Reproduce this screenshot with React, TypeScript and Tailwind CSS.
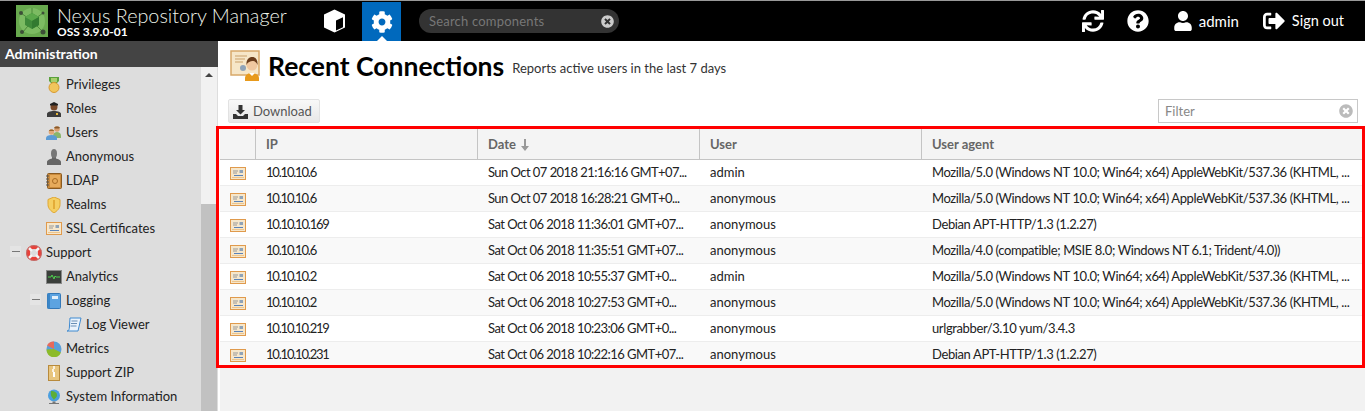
import { FaCog, FaQuestionCircle, FaSignOutAlt, FaSync, FaTimesCircle, FaUser } from 'react-icons/fa';

const font = "font-['Lato','Liberation_Sans',sans-serif]";

interface Row {
  ip: string;
  date: string;
  user: string;
  agent: string;
}

const chrome = 'Mozilla/5.0 (Windows NT 10.0; Win64; x64) AppleWebKit/537.36 (KHTML, ...';

const rows: Row[] = [
  { ip: '10.10.10.6', date: 'Sun Oct 07 2018 21:16:16 GMT+07...', user: 'admin', agent: chrome },
  { ip: '10.10.10.6', date: 'Sun Oct 07 2018 16:28:21 GMT+0...', user: 'anonymous', agent: chrome },
  { ip: '10.10.10.169', date: 'Sat Oct 06 2018 11:36:01 GMT+07...', user: 'anonymous', agent: 'Debian APT-HTTP/1.3 (1.2.27)' },
  { ip: '10.10.10.6', date: 'Sat Oct 06 2018 11:35:51 GMT+07...', user: 'anonymous', agent: 'Mozilla/4.0 (compatible; MSIE 8.0; Windows NT 6.1; Trident/4.0))' },
  { ip: '10.10.10.2', date: 'Sat Oct 06 2018 10:55:37 GMT+0...', user: 'admin', agent: chrome },
  { ip: '10.10.10.2', date: 'Sat Oct 06 2018 10:27:53 GMT+0...', user: 'anonymous', agent: chrome },
  { ip: '10.10.10.219', date: 'Sat Oct 06 2018 10:23:06 GMT+0...', user: 'anonymous', agent: 'urlgrabber/3.10 yum/3.4.3' },
  { ip: '10.10.10.231', date: 'Sat Oct 06 2018 10:22:16 GMT+07...', user: 'anonymous', agent: 'Debian APT-HTTP/1.3 (1.2.27)' },
];

const Logo = () => (
  <svg width="32" height="32" viewBox="0 0 32 32">
    <rect width="32" height="32" fill="#68a94e" />
    <circle cx="16" cy="16" r="13" fill="#7cbb62" />
    <path d="M16 16L5 8M16 16L27 8M16 16L7 27M16 16L27 27M16 16V3" stroke="#4d8a3a" strokeWidth="1" />
    <circle cx="5" cy="8" r="2" fill="#3d4f38" />
    <circle cx="27" cy="8" r="1.500" fill="#3d4f38" />
    <circle cx="6" cy="27" r="2" fill="#3d4f38" />
    <circle cx="27" cy="27" r="2.500" fill="#3d4f38" />
    <path d="M16 8l7 4v8l-7 4-7-4v-8z" fill="#3f8a3a" />
    <path d="M16 8l7 4-7 4-7-4z" fill="#5aa84a" />
    <path d="M16 16l7-4v8l-7 4z" fill="#327a30" />
  </svg>
);

const CubeIcon = () => (
  <svg width="23" height="24" viewBox="0 0 23 24">
    <path d="M11.500 0.500l10.500 5v13l-10.500 5-10.500-5v-13z" fill="#fff" />
    <path d="M13 11.500l7-3.300v10l-7 3.300z" fill="#000" />
  </svg>
);

const Cert = () => (
  <svg width="16" height="13" viewBox="0 0 16 13">
    <rect x="0.500" y="0.500" width="15" height="12" fill="#f6e7cc" stroke="#e09a4c" />
    <path d="M3 4h5M3 6h4" stroke="#999" />
    <rect x="9.500" y="3" width="3.500" height="3" fill="#8fa3b8" />
    <path d="M4 8.500h9" stroke="#5a82b8" />
    <path d="M2 10.500h12" stroke="#ecc48c" />
  </svg>
);

const Medal = () => (
  <svg width="16" height="16" viewBox="0 0 16 16">
    <path d="M3 0h10v4l-3 3H6L3 4z" fill="#5aa13c" />
    <rect x="5" y="1" width="6" height="4" fill="#a9cf6d" />
    <circle cx="8" cy="10.500" r="5" fill="#f1c65c" stroke="#d99a30" />
  </svg>
);

const Officer = () => (
  <svg width="16" height="16" viewBox="0 0 16 16">
    <path d="M1 16v-3c0-2 3-3 7-3s7 1 7 3v3z" fill="#3d3d3d" />
    <circle cx="8" cy="6" r="3.500" fill="#7a4a2a" />
    <path d="M4 3l4-2 4 2v1.500H4z" fill="#222" />
    <rect x="10" y="12" width="2" height="2" fill="#e8b83a" />
  </svg>
);

const UsersIcon = () => (
  <svg width="16" height="16" viewBox="0 0 16 16">
    <circle cx="11" cy="4" r="2.800" fill="#d9a070" />
    <path d="M7 11c0-3 2-4 4-4s4 1 4 4v2H7z" fill="#8ab56a" />
    <path d="M8 2.500c1-1.500 5-1.500 6 0l-1 1H9z" fill="#8a5a2a" />
    <circle cx="5.500" cy="7" r="2.800" fill="#e0a878" />
    <path d="M3 6c0-2 5-2 5 0z" fill="#9a6a30" />
    <path d="M0 15v-2c0-2 2.500-3 5.500-3s5.500 1 5.500 3v2z" fill="#5b9bd5" />
  </svg>
);

const AnonIcon = () => (
  <svg width="16" height="16" viewBox="0 0 16 16">
    <path d="M1 16v-3c0-2 3-3 5-3.500V7h4v2.500c2 .5 5 1.500 5 3.500v3z" fill="#666" />
    <ellipse cx="8" cy="4.500" rx="3" ry="4.500" fill="#777" />
  </svg>
);

const LdapIcon = () => (
  <svg width="16" height="16" viewBox="0 0 16 16">
    <rect x="1.500" y="0.500" width="14" height="15" rx="1" fill="#c98a3c" stroke="#8a5a20" />
    <rect x="4" y="2" width="10" height="12" fill="#e6ab5c" />
    <path d="M0 3h3M0 6h3M0 9h3M0 12h3" stroke="#555" />
    <circle cx="9" cy="8" r="2.500" fill="none" stroke="#a86c24" />
  </svg>
);

const Shield = () => (
  <svg width="16" height="16" viewBox="0 0 16 16">
    <path d="M8 0l6 2.500v5c0 4-3 6.500-6 8.500-3-2-6-4.500-6-8.500v-5z" fill="#f5cf62" stroke="#dfa632" />
    <path d="M8 3v9" stroke="#e3ac38" strokeWidth="2" />
  </svg>
);

const Lifebuoy = () => (
  <svg width="16" height="16" viewBox="0 0 16 16">
    <circle cx="8" cy="8" r="6" fill="none" stroke="#e8413a" strokeWidth="4" />
    <path d="M3 3l3 3M13 3l-3 3M3 13l3-3M13 13l-3-3" stroke="#f3f3f3" strokeWidth="2.500" />
    <circle cx="8" cy="8" r="7.500" fill="none" stroke="#999" strokeWidth="0.500" />
  </svg>
);

const Monitor = () => (
  <svg width="16" height="16" viewBox="0 0 16 16">
    <rect x="0.500" y="1.500" width="15" height="13" fill="#3b3f3b" stroke="#8a8a8a" />
    <path d="M2 8h3l1-2 2 4 1-3 1 1h4" fill="none" stroke="#4fd14f" />
  </svg>
);

const BookIcon = () => (
  <svg width="16" height="16" viewBox="0 0 16 16">
    <rect x="1.500" y="0.500" width="13" height="15" rx="1" fill="#5da3e0" stroke="#3478b8" />
    <rect x="1.500" y="0.500" width="2.500" height="15" fill="#3a86c8" />
    <rect x="6" y="3" width="6" height="3" fill="#e4f0fb" />
  </svg>
);

const Scroll = () => (
  <svg width="16" height="16" viewBox="0 0 16 16">
    <path d="M4 1h11l-3 13H1c1.500 0 2-1 2.300-2.500z" fill="#eaf3fc" stroke="#3f8ad0" />
    <path d="M5.500 4h6M5 6.500h6M4.500 9h6" stroke="#6a8fb5" />
  </svg>
);

const Pie = () => (
  <svg width="16" height="16" viewBox="0 0 16 16">
    <circle cx="8" cy="8" r="7.500" fill="#5a9fd8" />
    <path d="M8 8L1 4.500A7.500 7.500 0 0 1 8 .5z" fill="#e86a5a" />
    <path d="M8 8l7 3.500A7.500 7.500 0 0 1 .5 8.500z" fill="#8cbb2a" />
  </svg>
);

const ZipIcon = () => (
  <svg width="16" height="16" viewBox="0 0 16 16">
    <rect x="2.500" y="0.500" width="11" height="15" fill="#e8c57e" stroke="#b88a3c" />
    <path d="M8 1v3M7 4v3" stroke="#fff" strokeWidth="1.500" />
    <rect x="7" y="7" width="2" height="5" fill="#fff" />
  </svg>
);

const Globe = () => (
  <svg width="16" height="16" viewBox="0 0 16 16">
    <circle cx="8" cy="6.500" r="6" fill="#4a9fe0" />
    <path d="M5 2c3 0 6 1 6 4s-2 3-3 5c-1-2-4-3-3-9z" fill="#5cae3a" />
    <path d="M3 15h10v-1H9.500v-1.500h-3V14H3z" fill="#777" />
  </svg>
);

const navItems = [
  { name: 'Privileges', icon: <Medal />, indent: 46 },
  { name: 'Roles', icon: <Officer />, indent: 46 },
  { name: 'Users', icon: <UsersIcon />, indent: 46 },
  { name: 'Anonymous', icon: <AnonIcon />, indent: 46 },
  { name: 'LDAP', icon: <LdapIcon />, indent: 46 },
  { name: 'Realms', icon: <Shield />, indent: 46 },
  { name: 'SSL Certificates', icon: <Cert />, indent: 46 },
  { name: 'Support', icon: <Lifebuoy />, indent: 26, collapse: 10 },
  { name: 'Analytics', icon: <Monitor />, indent: 46 },
  { name: 'Logging', icon: <BookIcon />, indent: 46, collapse: 30 },
  { name: 'Log Viewer', icon: <Scroll />, indent: 66 },
  { name: 'Metrics', icon: <Pie />, indent: 46 },
  { name: 'Support ZIP', icon: <ZipIcon />, indent: 46 },
  { name: 'System Information', icon: <Globe />, indent: 46 },
];

const Sidebar = () => (
  <aside className="w-[218px] shrink-0 bg-[#dddddd] flex flex-col">
    <div className="h-[26px] bg-[#444444] pl-[5px] pb-[2px] flex items-center text-[14px] font-bold text-white">Administration</div>
    <div className="flex flex-1 min-h-0">
      <div className="flex-1 pt-[5px] overflow-hidden">
        {navItems.map((item) => (
          <div key={item.name} className="relative h-[24px] pt-px flex items-center gap-[4px] text-[13px] text-[#222222]" style={{ paddingLeft: item.indent }}>
            {item.collapse !== undefined && (
              <span className="absolute top-[6px] w-[11px] h-[11px] bg-[#e4e4e4] flex items-center justify-center" style={{ left: item.collapse }}>
                <span className="block w-[8px] h-px bg-[#777777]" />
              </span>
            )}
            <span className="w-[16px] h-[16px] flex items-center justify-center">{item.icon}</span>
            <span>{item.name}</span>
          </div>
        ))}
      </div>
      <div className="w-[16px] mr-px bg-[#f1f1f1] flex flex-col">
        <div className="h-[137px] flex justify-center pt-[6px]">
          <span className="block w-0 h-0 border-x-[4px] border-x-transparent border-b-[4px] border-b-[#444444]" />
        </div>
        <div className="flex-1 bg-[#c1c1c1]" />
      </div>
    </div>
  </aside>
);

const HeaderBar = () => (
  <header className="h-[41px] shrink-0 border-t border-[#999999] bg-black flex items-center text-white relative">
    <div className="ml-[16px]"><Logo /></div>
    <div className="ml-[9px] w-[245px] flex flex-col">
      <span className="text-[19.800px] leading-[22px] font-light text-[#eef4ea]">Nexus Repository Manager</span>
      <span className="text-[12px] leading-[12px] font-bold">OSS 3.9.0-01</span>
    </div>
    <div className="ml-[13px] w-[39px] flex justify-center"><CubeIcon /></div>
    <div className="relative ml-[8px] w-[39px] h-[39px] mt-[1px] bg-[#0069bd] flex items-center justify-center">
      <FaCog size={22} />
      <span className="absolute bottom-0 left-[15px] w-0 h-0 border-x-[5px] border-x-transparent border-b-[5px] border-b-white" />
    </div>
    <div className="ml-[18px] w-[200px] h-[24px] rounded-full bg-[#333333] flex items-center justify-between pl-[10px] pr-[5px]">
      <span className="pt-px text-[13px] text-[#777777] tracking-[0.2px]">Search components</span>
      <FaTimesCircle size={13} className="text-[#cccccc]" />
    </div>
    <div className="ml-auto flex items-center pr-[21px]">
      <FaSync size={22} />
      <FaQuestionCircle size={22} className="ml-[23px]" />
      <FaUser size={20} className="ml-[24px]" />
      <span className="ml-[6px] text-[15px]">admin</span>
      <FaSignOutAlt size={22} className="ml-[24px]" />
      <span className="ml-[7px] text-[14.500px]">Sign out</span>
    </div>
  </header>
);

const HeroIcon = () => (
  <svg width="32" height="32" viewBox="0 0 32 32">
    <rect x="1" y="1" width="28" height="24" fill="#f6e6c8" stroke="#d8a868" strokeWidth="1.500" />
    <path d="M5 6h12M5 9h10M5 12h8" stroke="#c9a06a" />
    <circle cx="13" cy="18" r="3" fill="#8fa3b8" />
    <path d="M15 31v-3c0-3 3-5 7-5s7 2 7 5v3z" fill="#e89a1c" />
    <path d="M19 23l3 3 3-3z" fill="#fff" />
    <circle cx="22" cy="15" r="5.500" fill="#f0c8a0" />
    <path d="M16.500 15c-.5-6 3-8 6-8s5.500 3 5 8c-1-3-3-4-5-4s-5 1-6 4z" fill="#6a3d1c" />
  </svg>
);

const DataTable = () => (
  <div>
    <div className="grid grid-cols-[35px_222px_222px_222px_1fr] h-[31px] bg-[#f4f4f4] border-b border-[#c4c4c4] text-[13px] font-bold text-[#666666]">
      <div />
      <div className="border-l border-[#c4c4c4] px-[10px] pt-px flex items-center">IP</div>
      <div className="border-l border-[#c4c4c4] px-[10px] pt-px flex items-center gap-[4px]">
        Date
        <svg width="10" height="12" viewBox="0 0 10 12"><path d="M4 0h2v7h3l-4 5-4-5h3z" fill="#999999" /></svg>
      </div>
      <div className="border-l border-[#c4c4c4] px-[10px] pt-px flex items-center">User</div>
      <div className="border-l border-[#c4c4c4] px-[10px] pt-px flex items-center">User agent</div>
    </div>
    {rows.map((row, i) => (
      <div key={i} className={`grid grid-cols-[35px_222px_222px_222px_1fr] h-[26px] pt-px items-center text-[13px] text-[#222222] border-b border-[#ededed] ${i % 2 ? 'bg-[#f9f9f9]' : 'bg-white'}`}>
        <div className="pl-[10px] flex"><Cert /></div>
        <div className="px-[11px] whitespace-nowrap tracking-[-1.2px]">{row.ip}</div>
        <div className="pl-[11px] whitespace-nowrap tracking-[-0.55px]">{row.date}</div>
        <div className="px-[11px] whitespace-nowrap">{row.user}</div>
        <div className="pl-[11px] whitespace-nowrap tracking-[-0.38px]">{row.agent}</div>
      </div>
    ))}
  </div>
);

const Main = () => (
  <main className="flex-1 min-w-0 ml-[2px] bg-[#f2f2f2] flex flex-col relative">
    <div className="bg-white">
      <div className="h-[50px] flex items-center pl-[10px]">
        <HeroIcon />
        <h1 className="ml-[6px] text-[26.500px] font-bold text-black leading-none">Recent Connections</h1>
        <span className="ml-[8px] mt-[5px] text-[13px] text-[#333333]">Reports active users in the last 7 days</span>
      </div>
      <div className="h-[38px] flex items-start justify-between pl-[8px] pr-[7px] pt-[8px]">
        <button className="h-[24px] w-[92px] pl-[4px] pt-px flex items-center gap-[5px] rounded-[2px] border border-[#e2e2e2] bg-gradient-to-b from-[#f8f8f8] to-[#e8e8e8] text-[13px] text-[#555555]">
          <svg width="15" height="14" viewBox="0 0 15 14"><path d="M5.500 0h4v5H12L7.500 9.500 3 5h2.500zM0 9h3l2 2h5l2-2h3v5H0z" fill="#333333" /></svg>
          Download
        </button>
        <div className="h-[24px] w-[200px] border border-[#c8c8c8] bg-white flex items-center justify-between pl-[6px] pr-[4px] text-[13px] text-[#888888]">
          <span className="pt-[2px]">Filter</span>
          <FaTimesCircle size={14} className="text-[#bbbbbb]" />
        </div>
      </div>
    </div>
    <DataTable />
    {/* red annotation drawn over the grid */}
    <div className="absolute left-[-4px] right-0 top-[85px] h-[242px] border-[3px] border-[#ff0000] pointer-events-none" />
  </main>
);

export default function App() {
  return (
    <div className={`${font} h-[411px] w-[1365px] overflow-hidden flex flex-col bg-white`}>
      <HeaderBar />
      <div className="flex flex-1 min-h-0">
        <Sidebar />
        <Main />
      </div>
    </div>
  );
}
